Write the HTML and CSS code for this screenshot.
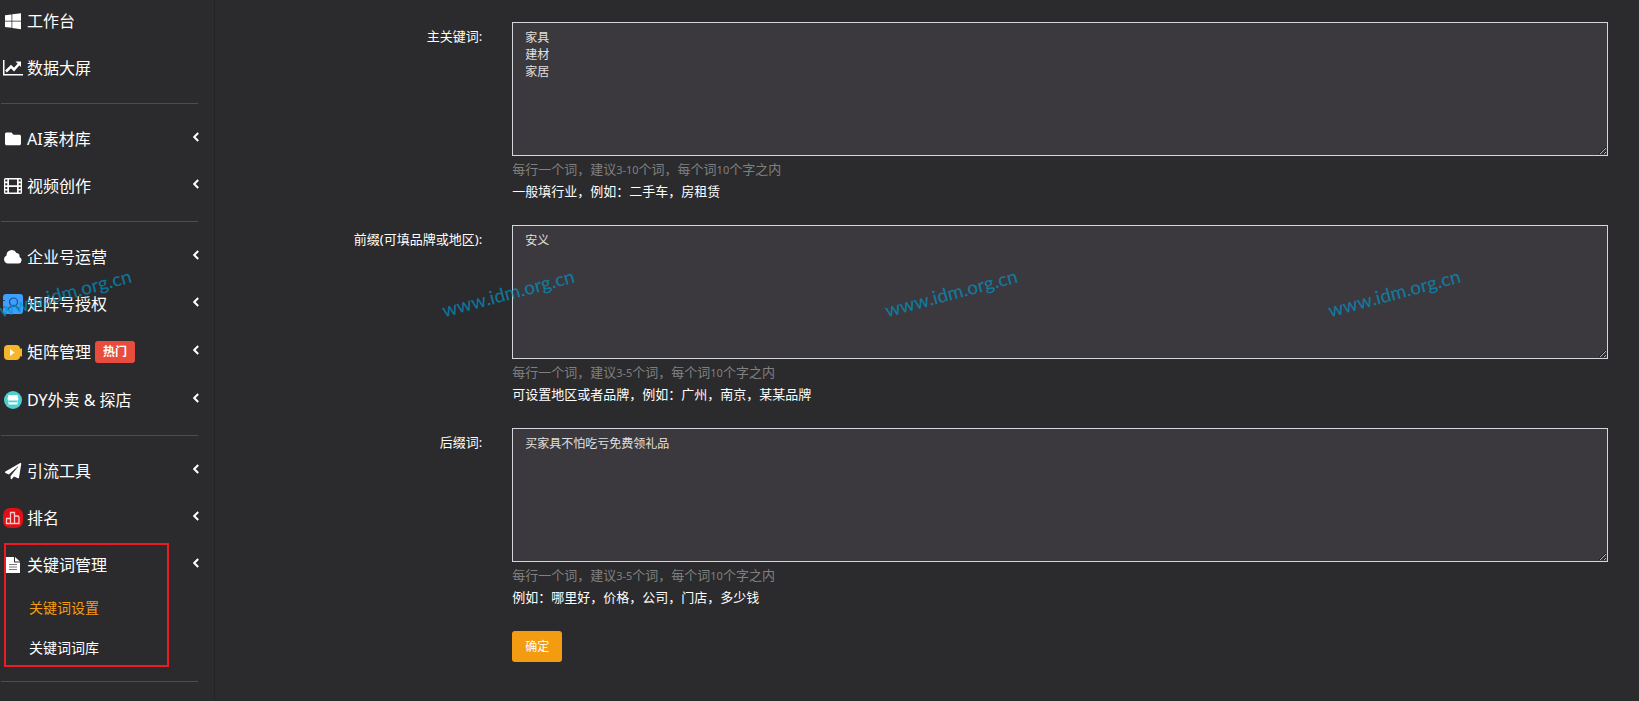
FILE: index.html
```html
<!DOCTYPE html>
<html lang="zh-CN">
  <head>
    <meta charset="UTF-8" />
    <meta name="viewport" content="width=device-width, initial-scale=1.0" />
    <title>关键词设置</title>
    <link rel="stylesheet" href="styles.css">
  </head>
  <body>
    <div class="page">
      <nav class="sidebar">
        <ul class="menu">
          <li>
            <a class="menu-link" href="#">
              <svg class="icon" viewBox="0 0 20 20"><path transform="translate(2 1) scale(.0357)" d="M0 93.7l183.6-25.3v177.4H0V93.7zm0 324.6l183.6 25.3V268.4H0v149.9zm203.8 28L448 480V268.4H203.8v177.9zm0-380.6v180.1H448V32L203.8 65.7z" /></svg>
              <span>工作台</span>
            </a>
          </li>
          <li>
            <a class="menu-link" href="#">
              <svg class="icon" viewBox="0 0 20 20"><path d="M0 2h1.500v14H20v1.500H0z" /><path d="M3 13.500l5-5 3 3L16 6" fill="none" stroke="#fff" stroke-width="2.600" /><path d="M12.500 3.500H18V9z" /></svg>
              <span>数据大屏</span>
            </a>
          </li>
        </ul>
        <hr>
        <ul class="menu">
          <li>
            <a class="menu-link" href="#">
              <svg class="icon" viewBox="0 0 20 20"><path transform="translate(2 1.500) scale(.0312 .033)" d="M464 128H272l-64-64H48C21.500 64 0 85.500 0 112v288c0 26.500 21.500 48 48 48h416c26.500 0 48-21.500 48-48V176c0-26.500-21.500-48-48-48z" /></svg>
              <span>AI素材库</span>
              <svg class="arrow" viewBox="0 0 6 10"><path d="M5.200 1L1.200 5l4 4" /></svg>
            </a>
          </li>
          <li>
            <a class="menu-link" href="#">
              <svg class="icon" viewBox="0 0 20 20"><path fill-rule="evenodd" d="M2.500 2h15A1.500 1.500 0 0 1 19 3.500v13a1.500 1.500 0 0 1-1.500 1.500h-15A1.500 1.500 0 0 1 1 16.500v-13A1.500 1.500 0 0 1 2.500 2zM2.300 3.500v2h2v-2zM2.300 7.200v2h2v-2zM2.300 10.900v2h2v-2zM2.300 14.500v2h2v-2zM15.700 3.500v2h2v-2zM15.700 7.200v2h2v-2zM15.700 10.900v2h2v-2zM15.700 14.500v2h2v-2zM6 3.500v5.700h8V3.500zM6 10.900v5.600h8v-5.600z" /></svg>
              <span>视频创作</span>
              <svg class="arrow" viewBox="0 0 6 10"><path d="M5.200 1L1.200 5l4 4" /></svg>
            </a>
          </li>
        </ul>
        <hr>
        <ul class="menu">
          <li>
            <a class="menu-link" href="#">
              <svg class="icon" viewBox="0 0 20 20"><path d="M5 16.500a4.200 4.200 0 0 1-1.500-8A5.300 5.300 0 0 1 13.500 6a3.500 3.500 0 0 1 3 4A3.400 3.400 0 0 1 15.700 16.500z" /></svg>
              <span>企业号运营</span>
              <svg class="arrow" viewBox="0 0 6 10"><path d="M5.200 1L1.200 5l4 4" /></svg>
            </a>
          </li>
          <li>
            <a class="menu-link" href="#">
              <svg class="icon" viewBox="0 0 20 20"><rect width="20" height="20" rx="3" fill="#409eff" /><g fill="none" stroke="#1c4f86" stroke-width="1.200"><circle cx="10.500" cy="8" r="4" /><path d="M5 16.500c.5-3 2.500-4.500 5.500-4.500s5 1.500 5.500 4.500M0 6.500h2M0 13h2" /></g></svg>
              <span>矩阵号授权</span>
              <svg class="arrow" viewBox="0 0 6 10"><path d="M5.200 1L1.200 5l4 4" /></svg>
            </a>
          </li>
          <li>
            <a class="menu-link" href="#">
              <svg class="icon" viewBox="0 0 20 20"><rect x="1" y="3" width="16" height="15" rx="4" fill="#f7b52c" /><path d="M16 8l1.500-1.500H19v8h-1.500L16 13z" fill="#f7b52c" /><path d="M7 7l4.500 3.500L7 14z" /></svg>
              <span>矩阵管理</span>
              <span class="badge">热门</span>
              <svg class="arrow" viewBox="0 0 6 10"><path d="M5.200 1L1.200 5l4 4" /></svg>
            </a>
          </li>
          <li>
            <a class="menu-link" href="#">
              <svg class="icon" viewBox="0 0 20 20"><circle cx="10" cy="10" r="9" fill="#4fcfd0" /><path d="M5.500 5h9l1 4a1.500 1.500 0 0 1-1 1.300v4.200h-9v-4.200A1.500 1.500 0 0 1 4.500 9z" /><path d="M6 10.500h8v1.800H6z" fill="#4fcfd0" /></svg>
              <span>DY外卖 &amp; 探店</span>
              <svg class="arrow" viewBox="0 0 6 10"><path d="M5.200 1L1.200 5l4 4" /></svg>
            </a>
          </li>
        </ul>
        <hr>
        <ul class="menu">
          <li>
            <a class="menu-link" href="#">
              <svg class="icon" viewBox="0 0 20 20"><path transform="translate(2 2) scale(.0318)" d="M476 3.200L12.500 270.600c-18.100 10.400-15.800 35.600 2.200 43.200L121 358.400l287.300-253.200c5.500-4.900 13.300 2.600 8.600 8.300L176 407v80.500c0 23.600 28.500 32.900 42.500 15.800L282 426l124.600 52.200c14.200 6 30.400-2.900 33-18.200l72-432C515 7.800 493.300-6.800 476 3.200z" /></svg>
              <span>引流工具</span>
              <svg class="arrow" viewBox="0 0 6 10"><path d="M5.200 1L1.200 5l4 4" /></svg>
            </a>
          </li>
          <li>
            <a class="menu-link" href="#">
              <svg class="icon" viewBox="0 0 20 20"><rect width="20" height="20" rx="7" fill="#e01014" /><path d="M3.500 15.500v-5h4v5zM7.500 15.500v-11h4v11zM11.500 15.500V8h3a1.500 1.500 0 0 1 1.500 1.500v6z" fill="none" stroke="#ffc9c9" stroke-width="1.300" /></svg>
              <span>排名</span>
              <svg class="arrow" viewBox="0 0 6 10"><path d="M5.200 1L1.200 5l4 4" /></svg>
            </a>
          </li>
          <li class="marked">
            <a class="menu-link" href="#">
              <svg class="icon" viewBox="0 0 20 20"><path d="M3 2h8v5.500h6V18H3z" /><path d="M12 2l5 4.500h-5z" /><path d="M6 9.500h8M6 12h8M6 14.500h8" stroke="#77777b" /></svg>
              <span>关键词管理</span>
              <svg class="arrow" viewBox="0 0 6 10"><path d="M5.200 1L1.200 5l4 4" /></svg>
            </a>
            <ul class="submenu">
              <li><a class="active" href="#">关键词设置</a></li>
              <li><a href="#">关键词词库</a></li>
            </ul>
          </li>
        </ul>
        <hr>
      </nav>

      <main class="content">
        <form>
          <div class="form-row">
            <label for="mainWords">主关键词:</label>
            <div class="field">
              <textarea id="mainWords">家具
建材
家居</textarea>
              <p class="hint">每行一个词，建议<span class="num">3-10</span>个词，每个词<span class="num">10</span>个字之内</p>
              <p>一般填行业，例如：二手车，房租赁</p>
            </div>
          </div>
          <div class="form-row">
            <label for="prefixWords">前缀(可填品牌或地区):</label>
            <div class="field">
              <textarea id="prefixWords">安义</textarea>
              <p class="hint">每行一个词，建议<span class="num">3-5</span>个词，每个词<span class="num">10</span>个字之内</p>
              <p>可设置地区或者品牌，例如：广州，南京，某某品牌</p>
            </div>
          </div>
          <div class="form-row">
            <label for="suffixWords">后缀词:</label>
            <div class="field">
              <textarea id="suffixWords">买家具不怕吃亏免费领礼品</textarea>
              <p class="hint">每行一个词，建议<span class="num">3-5</span>个词，每个词<span class="num">10</span>个字之内</p>
              <p>例如：哪里好，价格，公司，门店，多少钱</p>
            </div>
          </div>
          <div class="form-row">
            <div class="field field-submit">
              <button class="submit" type="submit">确定</button>
            </div>
          </div>
        </form>
      </main>

      <div class="watermark">
        <span>www.idm.org.cn</span>
        <span>www.idm.org.cn</span>
        <span>www.idm.org.cn</span>
        <span>www.idm.org.cn</span>
      </div>
    </div>
  </body>
</html>
```
FILE: styles.css
```css
* {
  box-sizing: border-box;
}

body {
  margin: 0;
  background-color: #2b2b2d;
  color: #fff;
  font-family: 'Noto Sans', 'Noto Sans CJK SC', sans-serif;
  font-size: 13px;
}

a {
  color: #fff;
  text-decoration: none;
}

ul {
  list-style: none;
  margin: 0;
  padding: 0;
}

.page {
  position: relative;
  display: flex;
  min-height: 100vh;
  overflow: hidden;
}

/* Sidebar */
.sidebar {
  flex: 0 0 215px;
  padding: 9px 15px 0 1px;
  border-right: 1px solid #232325;
}

.sidebar hr {
  height: 1px;
  margin: 23px 1px 23px 0;
  border: none;
  background-color: #4d4d4f;
}

.sidebar hr:last-child {
  margin-bottom: 0;
}

.menu {
  display: flex;
  flex-direction: column;
  gap: 23px;
}

.menu-link {
  display: flex;
  align-items: center;
  gap: 4px;
  min-height: 24px;
  padding-left: 2px;
  font-size: 16px;
  line-height: 24px;
}

.icon {
  flex: none;
  width: 20px;
  height: 20px;
  fill: #fff;
}

.arrow {
  width: 6px;
  height: 10px;
  margin: 0 0 4px auto;
  fill: none;
  stroke: #fff;
  stroke-width: 2;
}

.badge {
  margin: 2px 0;
  padding: 0 8px;
  border-radius: 3px;
  background-color: #e74c3c;
  font-size: 12px;
  font-weight: bold;
  line-height: 22px;
}

.submenu {
  display: flex;
  flex-direction: column;
  gap: 20px;
  margin-top: 21px;
  padding-left: 28px;
  font-size: 14px;
  line-height: 20px;
}

.submenu .active {
  color: #f39c12;
}

/* Red frame around the open menu */
.marked {
  position: relative;
}

.marked::after {
  content: '';
  position: absolute;
  top: -10px;
  bottom: -9px;
  left: 3px;
  width: 161px;
  border: 2px solid #ed1c24;
  pointer-events: none;
}

/* Form */
.content {
  flex: 1;
  min-width: 0;
  padding: 22px 16px 0 57px;
}

.form-row {
  display: grid;
  grid-template-columns: 1fr 5fr;
  margin-bottom: 23px;
}

.form-row:last-child {
  margin-bottom: 0;
}

.form-row label {
  padding: 4px 15px 0 0;
  line-height: 20px;
  text-align: right;
  white-space: nowrap;
  justify-self: end;
}

.field {
  min-width: 0;
  padding: 0 15px;
}

.field-submit {
  grid-column: 2;
}

.field p {
  margin: 0;
  line-height: 22px;
}

.field .hint {
  color: #808080;
}

.num {
  font-size: 11px;
  line-height: 1;
}

textarea {
  display: block;
  width: 100%;
  height: 134px;
  margin-bottom: 2px;
  padding: 6px 12px;
  border: 1px solid #d5d5de;
  border-radius: 0;
  background-color: #3b393e;
  color: #e0e0e0;
  font-family: inherit;
  font-size: 12px;
  line-height: 17px;
  resize: vertical;
}

.submit {
  display: block;
  padding: 0 13px;
  border: none;
  border-radius: 3px;
  background-color: #f39c12;
  color: #fff;
  cursor: pointer;
  font-family: inherit;
  font-size: 12px;
  line-height: 31px;
}

/* Watermark */
.watermark {
  position: absolute;
  top: 280px;
  left: -156px;
  display: grid;
  grid-template-columns: repeat(4, 443px);
  justify-items: center;
  color: rgba(0, 150, 200, 0.7);
  font-family: Lato, sans-serif;
  font-size: 19px;
  font-weight: 500;
  line-height: 26px;
  pointer-events: none;
}

.watermark span {
  transform: rotate(-15deg);
}
```
